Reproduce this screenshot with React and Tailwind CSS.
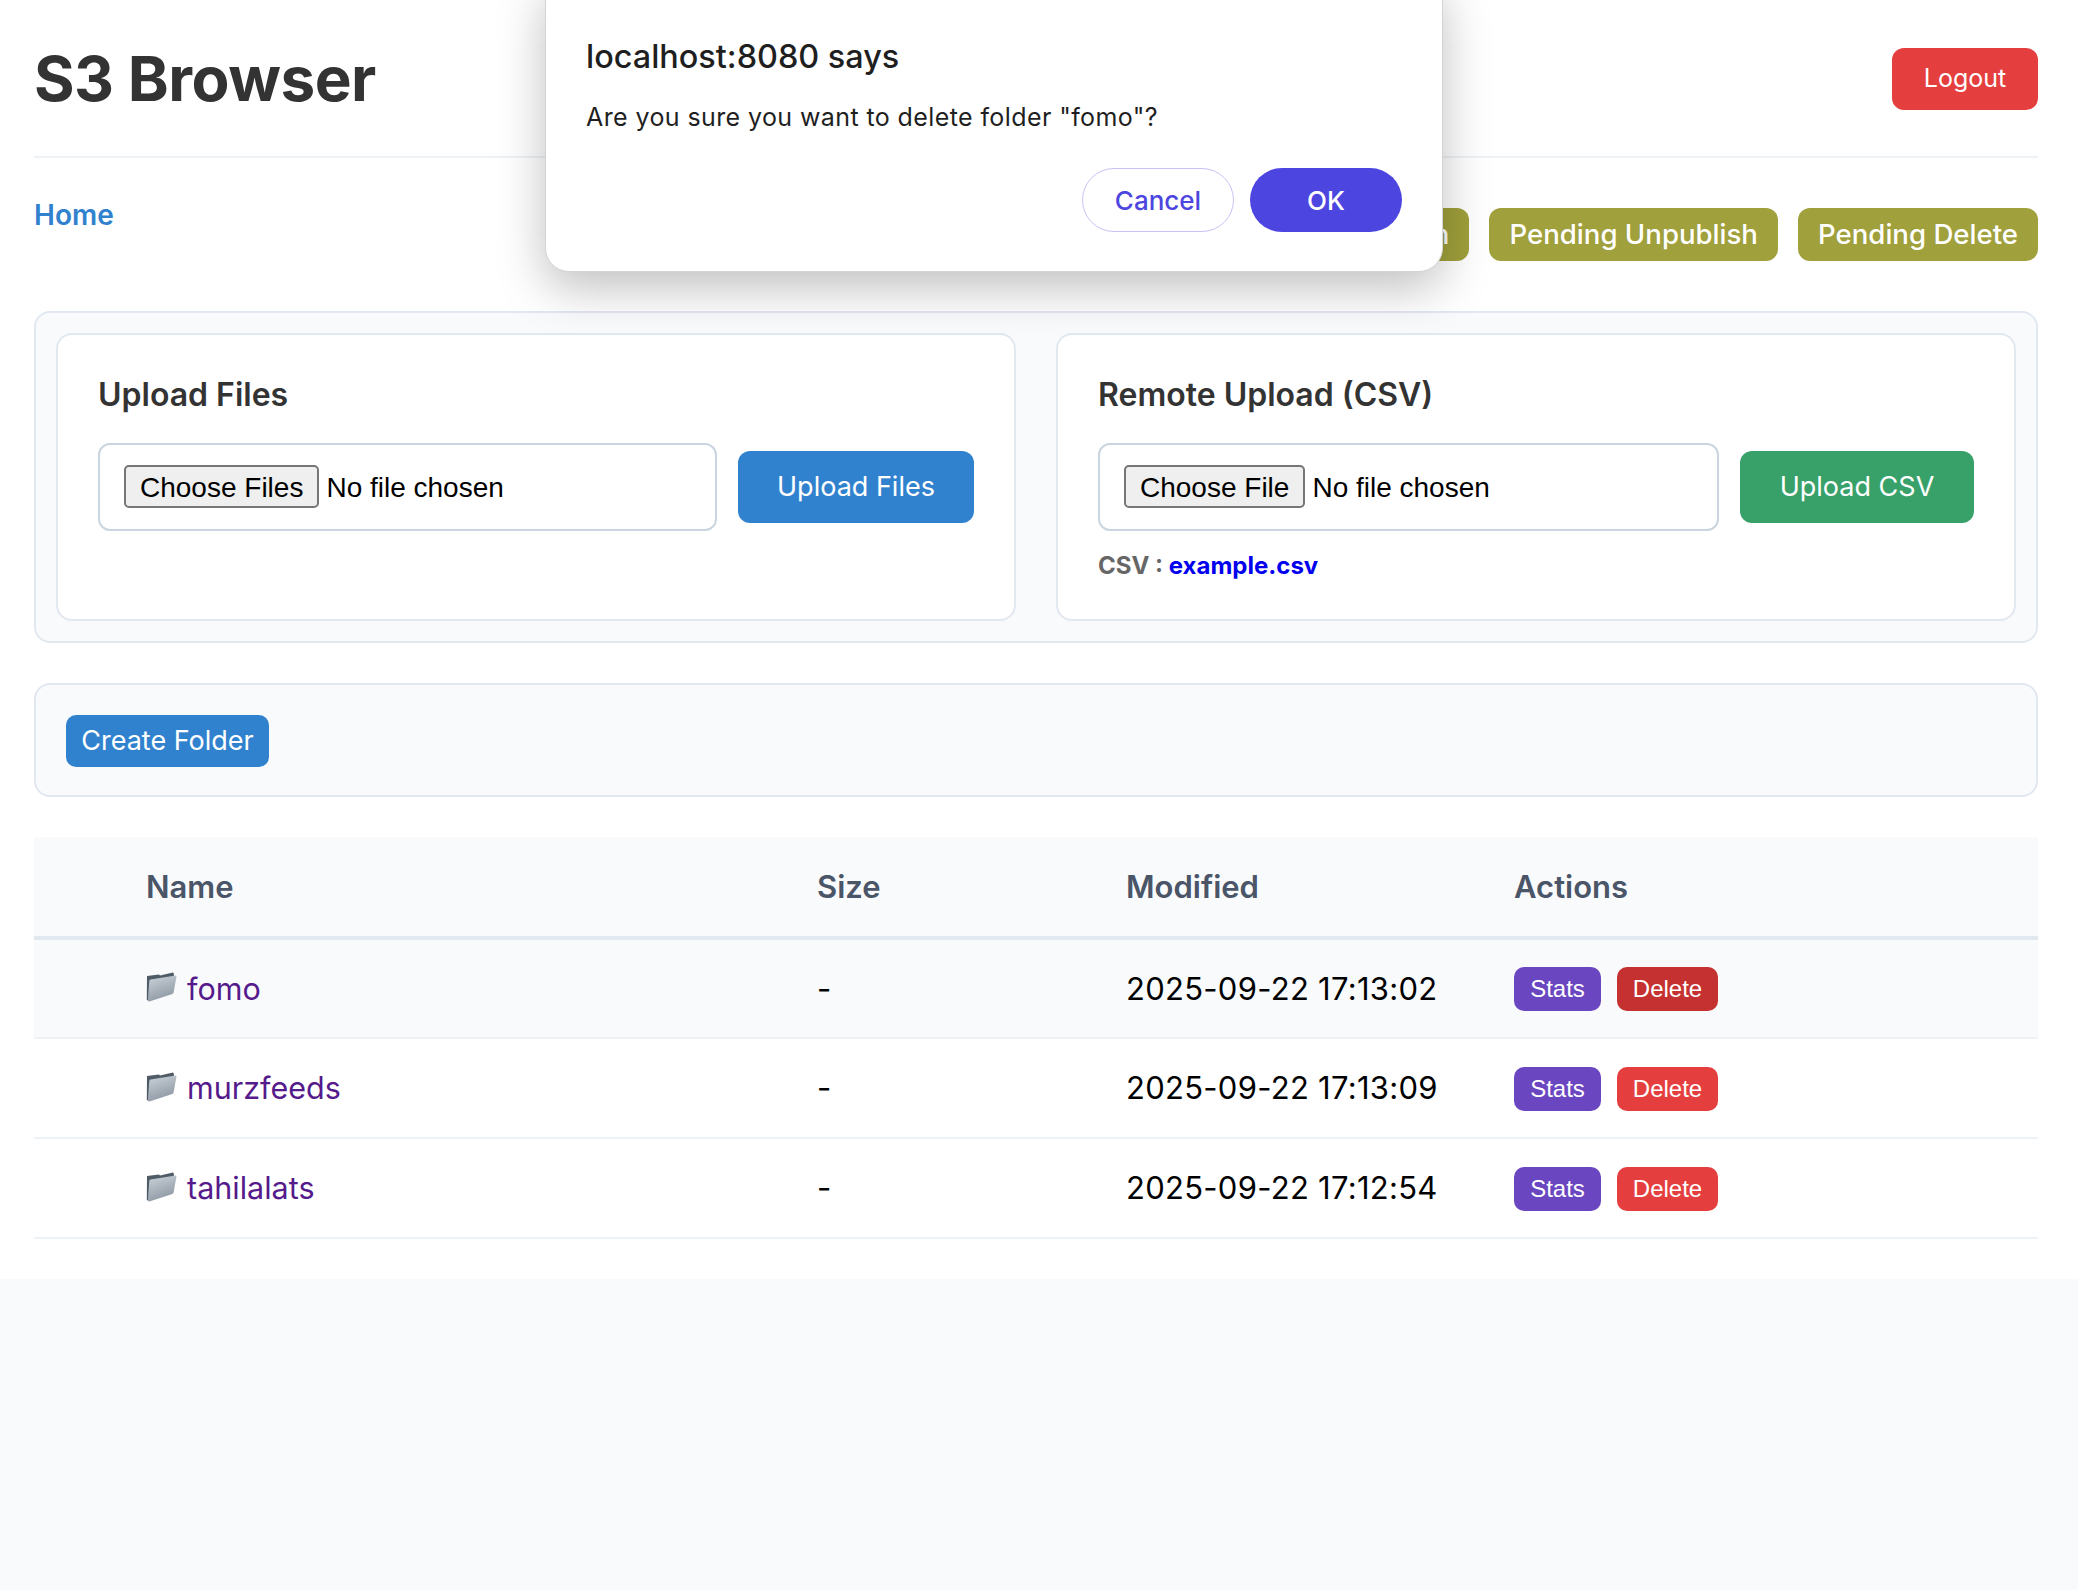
import { useId } from 'react';

const folders = [
  { name: 'fomo', modified: '2025-09-22 17:13:02', hover: true },
  { name: 'murzfeeds', modified: '2025-09-22 17:13:09' },
  { name: 'tahilalats', modified: '2025-09-22 17:12:54' },
];

const pending = ['Pending Publish', 'Pending Unpublish', 'Pending Delete'];

function FolderIcon() {
  const id = useId();
  return (
    <svg width="31" height="30" viewBox="0 0 31 30" className="shrink-0 mb-[3px]">
      <defs>
        <linearGradient id={id} x1="0.2" y1="0" x2="0.6" y2="1">
          <stop offset="0" stopColor="#c8cfd6" />
          <stop offset="1" stopColor="#8b96a1" />
        </linearGradient>
      </defs>
      <path d="M1 4 L13 2.5 L14 3.5 L27 0.5 L28 2 L26 20 L3 29 L0.8 28 Z" fill="#4f5b66" />
      <path d="M4.5 7.5 L29.5 3.6 Q30.6 3.6 30.4 5 L27.6 20.6 Q27.4 21.6 26.4 22 L3.4 29.4 Q1.8 29.8 1.9 28 L3.3 9 Q3.4 7.8 4.5 7.5 Z" fill={`url(#${id})`} />
    </svg>
  );
}

function UploadCard({ title, multiple, buttonLabel, buttonClass, children }) {
  return (
    <div className="flex-1 bg-white border-2 border-[#e2e8f0] rounded-2xl pl-[40px] pr-[40px] pt-[39px]">
      <h3 className="text-[32px] leading-[42px] font-semibold text-[#333333]">{title}</h3>
      <div className="flex items-center gap-[21px] mt-[27px]">
        <input
          type="file"
          multiple={multiple}
          className="flex-1 min-w-0 h-[88px] bg-white border-2 border-[#cbd5e0] rounded-xl pl-[24px] py-[20px] text-[28px] text-black font-['Liberation_Sans',sans-serif] file:h-[43px] file:px-[14px] file:mr-[7px] file:text-[28px] file:text-black file:bg-[#efefef] file:border-2 file:border-solid file:border-[#767676] file:rounded-[5px] file:font-['Liberation_Sans',sans-serif]"
        />
        <button className={`h-[72px] rounded-xl text-white text-[27px] ${buttonClass}`}>
          {buttonLabel}
        </button>
      </div>
      {children}
    </div>
  );
}

function FolderRow({ folder }) {
  return (
    <tr className={`h-[100px] border-b-2 border-[#edf2f7] ${folder.hover ? 'bg-[#f9fafc]' : ''}`}>
      <td />
      <td className="px-[23px]">
        <div className="flex items-center gap-[10px]">
          <FolderIcon />
          <a href="#" className="text-[30.5px] text-[#551a8b]">{folder.name}</a>
        </div>
      </td>
      <td className="px-[23px] pt-[1px] text-[31px] text-black">-</td>
      <td className="px-[23px] pt-[1px] text-[31px] text-black tracking-[0.28px] whitespace-nowrap">{folder.modified}</td>
      <td className="px-[23px] pt-[1px]">
        <div className="flex gap-[16px] font-['Liberation_Sans',sans-serif] text-[24px] text-white">
          <button className="w-[87px] h-[44px] rounded-[10px] bg-[#6b46c1]">Stats</button>
          <button className={`w-[101px] h-[44px] rounded-[10px] ${folder.hover ? 'bg-[#c53030]' : 'bg-[#e53e3e]'}`}>Delete</button>
        </div>
      </td>
    </tr>
  );
}

export default function App() {
  return (
    <div className="relative min-h-[1590px] bg-[#f9fafc] overflow-hidden font-['Inter',sans-serif]">
      <div className="bg-white pl-[34px] pr-[40px] h-[1279px]">
        {/* Header */}
        <header className="flex items-center justify-between h-[158px] border-b-2 border-[#edf2f7] pt-[1px]">
          <h1 className="text-[62px] font-bold text-[#333333] tracking-[-0.5px]">S3 Browser</h1>
          <button className="w-[146px] h-[62px] rounded-xl bg-[#e53e3e] text-white text-[25px]">Logout</button>
        </header>

        <div className="flex items-start justify-between pt-[50px]">
          <a href="#" className="text-[28px] leading-[36px] font-semibold text-[#3182ce] mt-[-11px]">Home</a>
          <div className="flex gap-[20px]">
            {pending.map((label) => (
              <button key={label} className="h-[53px] px-[20px] pt-[1px] rounded-xl bg-[#a0a03c] text-white text-[27.6px] font-medium">
                {label}
              </button>
            ))}
          </div>
        </div>

        {/* Upload panel */}
        <section className="flex gap-[40px] mt-[50px] h-[332px] p-[20px] bg-[#f9fafc] border-2 border-[#e2e8f0] rounded-2xl">
          <UploadCard title="Upload Files" multiple buttonLabel="Upload Files" buttonClass="w-[236px] bg-[#3182ce]" />
          <UploadCard title="Remote Upload (CSV)" buttonLabel="Upload CSV" buttonClass="w-[234px] bg-[#38a169]">
            <p className="mt-[17px] text-[24px] font-bold text-[#666666]">
              CSV : <a href="#" className="text-[#0000ee]">example.csv</a>
            </p>
          </UploadCard>
        </section>

        <div className="flex items-center mt-[40px] h-[114px] pl-[30px] pt-[2px] bg-[#f9fafc] border-2 border-[#e2e8f0] rounded-2xl">
          <button className="w-[203px] h-[52px] rounded-[10px] bg-[#3182ce] text-white text-[27px]">Create Folder</button>
        </div>

        {/* Folder table */}
        <table className="w-full table-fixed border-collapse mt-[40px]">
          <colgroup>
            <col className="w-[89px]" />
            <col className="w-[671px]" />
            <col className="w-[309px]" />
            <col className="w-[388px]" />
            <col />
          </colgroup>
          <thead>
            <tr className="h-[101px] bg-[#f9fafc] border-b-4 border-[#e2e8f0] text-left text-[31px] font-semibold text-[#4a5568]">
              <th />
              <th className="px-[23px] pt-[2px] font-semibold">Name</th>
              <th className="px-[23px] pt-[2px] font-semibold">Size</th>
              <th className="px-[23px] pt-[2px] font-semibold">Modified</th>
              <th className="px-[23px] pt-[2px] font-semibold">Actions</th>
            </tr>
          </thead>
          <tbody>
            {folders.map((folder) => (
              <FolderRow key={folder.name} folder={folder} />
            ))}
          </tbody>
        </table>
      </div>

      {/* Browser confirm dialog */}
      <div className="absolute top-[-24px] left-[545px] w-[898px] h-[296px] bg-white rounded-3xl border border-[#d4d4d4] shadow-[0_16px_48px_rgba(0,0,0,0.25)] px-[40px] pt-[57px]">
        <p className="text-[32.4px] leading-[46px] font-medium text-[#1f1f1f]">localhost:8080 says</p>
        <p className="mt-[20px] text-[25px] leading-[34px] text-[#1f1f1f] tracking-[0.4px]">Are you sure you want to delete folder "fomo"?</p>
        <div className="flex justify-end gap-[16px] mt-[34px]">
          <button className="w-[152px] h-[64px] rounded-full bg-white border border-[#c7c4f5] text-[#4c45e0] text-[26px] font-medium">Cancel</button>
          <button className="w-[152px] h-[64px] rounded-full bg-[#4c45e0] text-white text-[26px] font-medium">OK</button>
        </div>
      </div>
    </div>
  );
}
